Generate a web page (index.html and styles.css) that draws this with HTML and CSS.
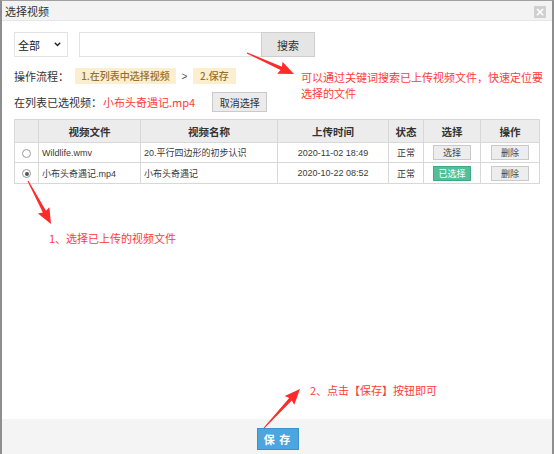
FILE: index.html
```html
<!DOCTYPE html>
<html lang="zh-CN">
<head>
<meta charset="utf-8">
<title>选择视频</title>
<link rel="stylesheet" href="styles.css">
</head>
<body>
<div class="dialog">
  <div class="titlebar">
    <span class="title">选择视频</span>
    <span class="close">×</span>
  </div>
  <div class="content">
    <div class="search-row">
      <div class="select">
        <span>全部</span>
        <svg class="chev" width="7" height="5" viewBox="0 0 7 5"><path d="M0.8 0.8 L3.5 3.6 L6.2 0.8" fill="none" stroke="#222" stroke-width="1.4"/></svg>
      </div>
      <div class="search-box">
        <div class="input"></div>
        <div class="btn-search">搜索</div>
      </div>
    </div>
    <div class="flow-row">
      <span class="label">操作流程：</span>
      <span class="step first">1.在列表中选择视频</span>
      <span class="gt">&gt;</span>
      <span class="step">2.保存</span>
    </div>
    <div class="chosen-row">
      <span class="label">在列表已选视频：</span>
      <span class="chosen">小布头奇遇记.mp4</span>
      <span class="btn-cancel">取消选择</span>
    </div>
    <table class="grid">
      <colgroup>
        <col style="width:24px"><col style="width:102px"><col style="width:137px"><col style="width:111px"><col style="width:35px"><col style="width:57px"><col style="width:59px">
      </colgroup>
      <thead>
        <tr><th></th><th>视频文件</th><th>视频名称</th><th>上传时间</th><th>状态</th><th>选择</th><th>操作</th></tr>
      </thead>
      <tbody>
        <tr class="r1">
          <td class="c"><span class="radio"></span></td>
          <td class="l">Wildlife.wmv</td>
          <td class="l">20.平行四边形的初步认识</td>
          <td class="c">2020-11-02 18:49</td>
          <td class="c">正常</td>
          <td class="c"><span class="sbtn">选择</span></td>
          <td class="c"><span class="sbtn">删除</span></td>
        </tr>
        <tr class="r2">
          <td class="c"><span class="radio on"></span></td>
          <td class="l">小布头奇遇记.mp4</td>
          <td class="l">小布头奇遇记</td>
          <td class="c">2020-10-22 08:52</td>
          <td class="c">正常</td>
          <td class="c"><span class="sbtn green">已选择</span></td>
          <td class="c"><span class="sbtn">删除</span></td>
        </tr>
      </tbody>
    </table>
  </div>
  <div class="footer">
    <span class="btn-save">保 存</span>
  </div>

  <div class="note note1">可以通过关键词搜索已上传视频文件，快速定位要<br>选择的文件</div>
  <div class="note note2">1、选择已上传的视频文件</div>
  <div class="note note3">2、点击【保存】按钮即可</div>

  <svg class="arrows" width="554" height="454" viewBox="0 0 554 454">
    <g fill="#ff2a2a">
      <polygon transform="translate(247,53) rotate(24.1)" points="0,-0.5 37.5,-1.8 36,-6.5 51.5,0 36,6.5 37.5,1.8 0,0.5"/>
      <polygon transform="translate(28,181) rotate(61.9)" points="0,-0.5 34.8,-1.8 33.3,-6.5 48.8,0 33.3,6.5 34.8,1.8 0,0.5"/>
      <polygon transform="translate(264,428) rotate(-47.3)" points="0,-0.5 39.1,-1.8 37.6,-6.5 53.1,0 37.6,6.5 39.1,1.8 0,0.5"/>
    </g>
  </svg>
</div>
</body>
</html>
```

FILE: styles.css
```css
* { box-sizing: border-box; }
html, body { margin: 0; padding: 0; background: #fff; }
body {
  font-family: "Noto Sans CJK SC", "Liberation Sans", sans-serif;
  font-size: 11px;
  color: #333;
}
.dialog {
  position: relative;
  width: 554px;
  height: 454px;
  border-left: 2px solid #8e8e8e;
  border-right: 2px solid #8e8e8e;
  border-top: 1px solid #a0a0a0;
  display: flex;
  flex-direction: column;
  background: #fff;
}
.titlebar {
  height: 20px;
  background: #f3f3f3;
  border-bottom: 1px solid #e6e6e6;
  display: flex;
  align-items: center;
  justify-content: space-between;
  padding: 0 6px 0 3px;
  flex: none;
}
.title { font-size: 11px; color: #333; line-height: 14px; }
.close {
  width: 12px;
  height: 12px;
  background: #cfcfcf;
  color: #fff;
  font-family: "DejaVu Sans", sans-serif;
  font-size: 12px;
  font-weight: bold;
  line-height: 12px;
  text-align: center;
  margin-top: 2px;
}
.content {
  flex: 1;
  padding: 11px 12px 0 12px;
}
.search-row {
  display: flex;
  align-items: center;
  height: 25px;
}
.select {
  width: 54px;
  height: 25px;
  border: 1px solid #e3e3e3;
  display: flex;
  align-items: center;
  justify-content: space-between;
  padding: 0 6px 0 3px;
  font-size: 11px;
  color: #222;
}
.chev { display: block; }
.search-box {
  margin-left: 11px;
  display: flex;
  height: 25px;
}
.input {
  width: 182px;
  height: 25px;
  border: 1px solid #e3e3e3;
  border-right: none;
}
.btn-search {
  width: 54px;
  height: 25px;
  background: #e5e5e5;
  border: 1px solid #cfcfcf;
  display: flex;
  align-items: center;
  justify-content: center;
  font-size: 11px;
  color: #333;
}
.flow-row {
  margin-top: 11px;
  display: flex;
  align-items: center;
  height: 16px;
}
.label { font-size: 11px; color: #333; }
.step {
  background: #fcefcf;
  color: #94702f;
  font-size: 10px;
  font-weight: 500;
  height: 16px;
  line-height: 16px;
  padding: 0 7px;
}
.step.first { margin-left: 6px; width: 101px; text-align: center; padding: 0; }
.gt {
  width: 17px;
  text-align: center;
  font-family: "Liberation Sans", sans-serif;
  font-size: 10px;
  color: #555;
}
.chosen-row {
  margin-top: 8px;
  display: flex;
  align-items: center;
  height: 20px;
}
.chosen { color: #ff3a3a; font-size: 11px; margin-left: 1px; }
.btn-cancel {
  margin-left: 17px;
  width: 55px;
  height: 20px;
  background: #ebebeb;
  border: 1px solid #cacaca;
  display: flex;
  align-items: center;
  justify-content: center;
  font-size: 10px;
  color: #333;
}
.grid {
  margin-top: 7px;
  width: 525px;
  border-collapse: collapse;
  table-layout: fixed;
}
.grid th, .grid td {
  border: 1px solid #d8d8d8;
  padding: 0 3px;
  white-space: nowrap;
  overflow: hidden;
}
.grid th {
  background: #ececec;
  height: 23px;
  font-size: 10.5px;
  font-weight: bold;
  color: #333;
  text-align: center;
}
.grid td {
  height: 20px;
  font-family: "Liberation Sans", "Noto Sans CJK SC", sans-serif;
  font-size: 9px;
  color: #3a3a3a;
}
.grid tr.r2 td { height: 21px; }
.grid td.c { text-align: center; }
.grid td.l { text-align: left; }
.radio {
  display: inline-block;
  width: 9px;
  height: 9px;
  border: 1px solid #9a9a9a;
  border-radius: 50%;
  background: #fff;
  vertical-align: middle;
  position: relative;
}
.radio.on::after {
  content: "";
  position: absolute;
  left: 1.5px;
  top: 1.5px;
  width: 4px;
  height: 4px;
  border-radius: 50%;
  background: #555;
}
.sbtn {
  display: inline-block;
  width: 38px;
  height: 15px;
  line-height: 13px;
  background: #ededed;
  border: 1px solid #c9c9c9;
  font-family: "Noto Sans CJK SC", sans-serif;
  font-size: 9px;
  color: #444;
  vertical-align: middle;
}
.sbtn.green {
  background: #4fc09a;
  border-color: #3eaa85;
  color: #fff;
}
.footer {
  flex: none;
  height: 35px;
  background: #f4f4f4;
  display: flex;
  justify-content: center;
  align-items: flex-start;
  padding-top: 9px;
}
.btn-save {
  margin-left: 1px;
  width: 42px;
  height: 22px;
  background: #4ba5df;
  border: 1px solid #3c92cc;
  color: #fff;
  font-weight: bold;
  font-size: 11px;
  display: flex;
  align-items: center;
  justify-content: center;
  letter-spacing: 1px;
}
.note {
  position: absolute;
  color: #ff3b3b;
  font-size: 11px;
  line-height: 16px;
  white-space: nowrap;
}
.note1 { left: 299px; top: 68px; }
.note2 { left: 47px; top: 229px; }
.note3 { left: 308px; top: 381px; }
.arrows {
  position: absolute;
  left: -2px;
  top: -1px;
  pointer-events: none;
}
```
